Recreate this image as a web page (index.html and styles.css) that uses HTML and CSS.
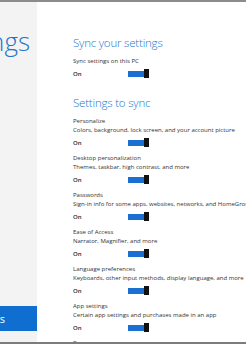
FILE: index.html
```html
<!DOCTYPE html>
<html lang="en">
<head>
    <meta charset="UTF-8">
    <meta name="viewport" content="width=device-width, initial-scale=1.0">
    <title>PC settings</title>
    <link rel="stylesheet" href="styles.css">
</head>
<body>
    <div class="screen">
        <div class="nav">
            <div class="navTitle"><span>PC settings</span></div>
            <div class="navItem active"><span>Sync your settings</span></div>
        </div>
        <div class="content">
            <div class="heading first">Sync your settings</div>
            <div class="desc">Sync settings on this PC</div>
            <div class="switchRow">
                <span class="state">On</span>
                <span class="toggle"><span class="fill"></span><span class="thumb"></span></span>
            </div>

            <div class="heading">Settings to sync</div>

            <div class="item">
                <div class="name">Personalize</div>
                <div class="desc">Colors, background, lock screen, and your account picture</div>
                <div class="switchRow">
                    <span class="state">On</span>
                    <span class="toggle"><span class="fill"></span><span class="thumb"></span></span>
                </div>
            </div>
            <div class="item">
                <div class="name">Desktop personalization</div>
                <div class="desc">Themes, taskbar, high contrast, and more</div>
                <div class="switchRow">
                    <span class="state">On</span>
                    <span class="toggle"><span class="fill"></span><span class="thumb"></span></span>
                </div>
            </div>
            <div class="item">
                <div class="name">Passwords</div>
                <div class="desc">Sign-in info for some apps, websites, networks, and HomeGroup</div>
                <div class="switchRow">
                    <span class="state">On</span>
                    <span class="toggle"><span class="fill"></span><span class="thumb"></span></span>
                </div>
            </div>
            <div class="item">
                <div class="name">Ease of Access</div>
                <div class="desc">Narrator, Magnifier, and more</div>
                <div class="switchRow">
                    <span class="state">On</span>
                    <span class="toggle"><span class="fill"></span><span class="thumb"></span></span>
                </div>
            </div>
            <div class="item">
                <div class="name">Language preferences</div>
                <div class="desc">Keyboards, other input methods, display language, and more</div>
                <div class="switchRow">
                    <span class="state">On</span>
                    <span class="toggle"><span class="fill"></span><span class="thumb"></span></span>
                </div>
            </div>
            <div class="item">
                <div class="name">App settings</div>
                <div class="desc">Certain app settings and purchases made in an app</div>
                <div class="switchRow">
                    <span class="state">On</span>
                    <span class="toggle"><span class="fill"></span><span class="thumb"></span></span>
                </div>
            </div>
            <div class="item">
                <div class="name">Browser</div>
                <div class="desc">Settings and info like history and favorites</div>
            </div>
        </div>
    </div>
</body>
</html>
```

FILE: styles.css
```css
body {
    margin: 0;
    background-color: #ffffff;
    font-family: 'Open Sans', 'Liberation Sans', sans-serif;
}

.screen {
    display: flex;
    height: 344px;
    box-sizing: border-box;
    border-top: 2px solid #8c8c8c;
    border-bottom: 2px solid #7c7c7c;
    overflow: hidden;
}

.nav {
    width: 37px;
    flex-shrink: 0;
    background-color: #f3f3f3;
    overflow: hidden;
}

.navTitle {
    display: flex;
    justify-content: flex-end;
    white-space: nowrap;
    margin-top: 24px;
    padding-right: 7px;
    font-size: 26px;
    font-weight: 300;
    line-height: 30px;
    color: #1f74cc;
}

.navItem {
    display: flex;
    justify-content: flex-end;
    align-items: center;
    white-space: nowrap;
    height: 25px;
    padding-right: 32px;
    font-size: 11px;
    color: #ffffff;
}

.active {
    margin-top: 250px;
    background-color: #0f6ecf;
}

.content {
    flex: 1;
    padding-left: 36px;
    white-space: nowrap;
}

.heading {
    font-size: 11.5px;
    font-weight: 300;
    line-height: 16px;
    letter-spacing: -0.2px;
    color: #2278cf;
    margin-top: 17px;
    margin-bottom: 6px;
}

.heading.first {
    margin-top: 33px;
    margin-bottom: 6px;
}

.name, .desc {
    font-size: 6px;
    line-height: 9px;
    color: #333333;
}

.desc {
    line-height: 8px;
}

.switchRow {
    display: flex;
    align-items: center;
    height: 9px;
    margin-top: 4px;
}

.state {
    width: 54px;
    font-size: 6px;
    font-weight: 600;
    color: #222222;
}

.toggle {
    position: relative;
    display: flex;
    align-items: center;
    width: 22px;
    height: 9px;
}

.fill {
    width: 16px;
    height: 6px;
    margin-left: 1px;
    background-color: #1a6fd0;
}

.thumb {
    width: 5px;
    height: 9px;
    background-color: #111111;
}

.item {
    margin-bottom: 7px;
}
```
